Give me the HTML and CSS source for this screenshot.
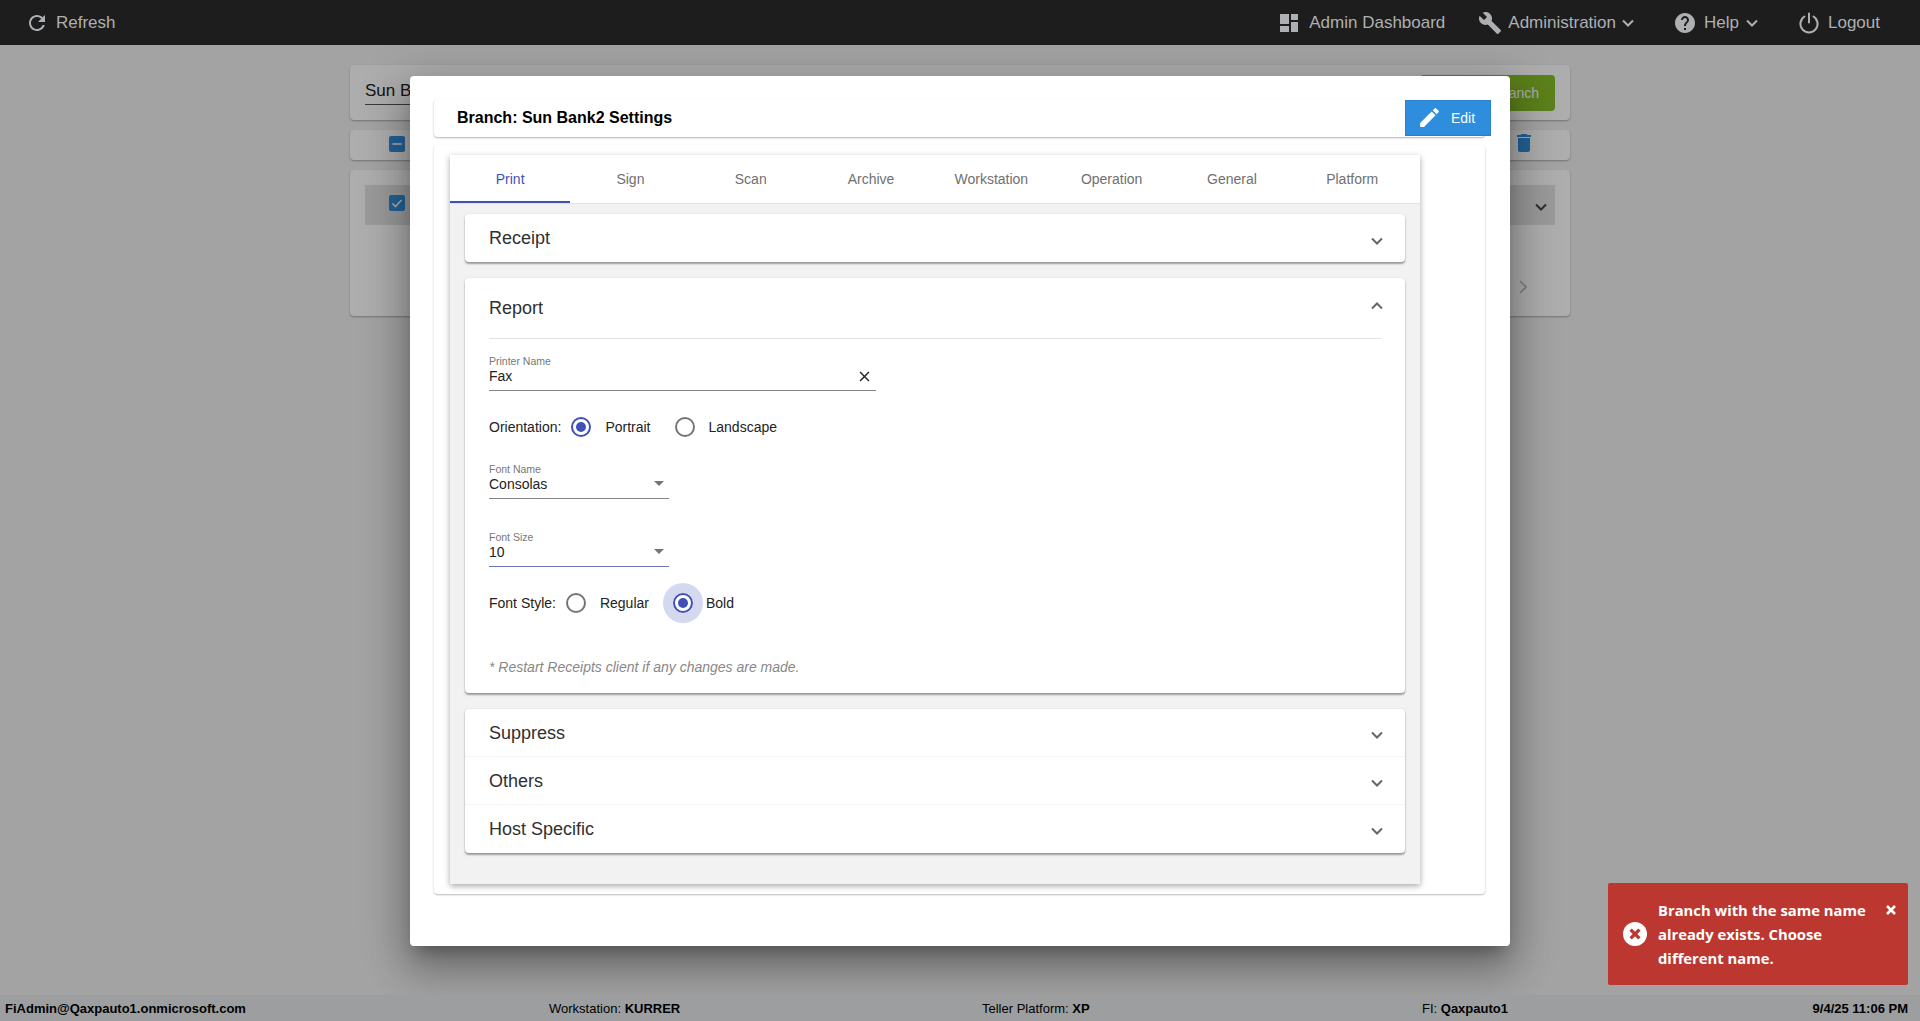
FILE: index.html
```html
<!DOCTYPE html>
<html lang="en">
<head>
<meta charset="utf-8">
<title>Branch Settings</title>
<link rel="stylesheet" href="styles.css">
</head>
<body>
<header class="topbar">
  <div class="nav-item nav-refresh">
    <svg class="ico" viewBox="0 0 24 24"><path d="M17.65 6.35C16.2 4.9 14.21 4 12 4c-4.42 0-7.99 3.58-7.99 8s3.57 8 7.99 8c3.73 0 6.84-2.55 7.73-6h-2.08c-.82 2.33-3.04 4-5.65 4-3.31 0-6-2.69-6-6s2.69-6 6-6c1.66 0 3.14.69 4.22 1.78L13 11h7V4l-2.35 2.35z"/></svg>
    <span>Refresh</span>
  </div>
  <div class="nav-right">
    <div class="nav-item nav-dash">
      <svg class="ico" viewBox="0 0 24 24"><path d="M3 13h9V3H3v10zm0 8h9v-6H3v6zm11 0h7V11h-7v10zm0-18v6h7V3h-7z"/></svg>
      <span>Admin Dashboard</span>
    </div>
    <div class="nav-item nav-admin">
      <svg class="ico" viewBox="0 0 24 24"><path d="M22.7 19l-9.1-9.1c.9-2.3.4-5-1.5-6.9-2-2-5-2.4-7.4-1.3L9 6 6 9 1.6 4.7C.4 7.1.9 10.1 2.9 12.1c1.9 1.9 4.6 2.4 6.9 1.5l9.1 9.1c.4.4 1 .4 1.4 0l2.3-2.3c.5-.4.5-1.1.1-1.4z"/></svg>
      <span>Administration</span>
      <svg class="caret" viewBox="0 0 12 8"><path d="M1 1.5l5 5 5-5"/></svg>
    </div>
    <div class="nav-item nav-help">
      <svg class="ico" viewBox="0 0 24 24"><path d="M12 2C6.48 2 2 6.48 2 12s4.48 10 10 10 10-4.48 10-10S17.52 2 12 2zm1 17h-2v-2h2v2zm2.07-7.75l-.9.92C13.45 12.9 13 13.5 13 15h-2v-.5c0-1.1.45-2.1 1.17-2.83l1.24-1.26c.37-.36.59-.86.59-1.41 0-1.1-.9-2-2-2s-2 .9-2 2H8c0-2.21 1.79-4 4-4s4 1.79 4 4c0 .88-.36 1.68-.93 2.25z"/></svg>
      <span>Help</span>
      <svg class="caret" viewBox="0 0 12 8"><path d="M1 1.5l5 5 5-5"/></svg>
    </div>
    <div class="nav-item nav-logout">
      <svg class="ico ico-stroke" viewBox="0 0 24 24"><path d="M7.5 5.5a8.6 8.6 0 1 0 9 0M12 2.5v9"/></svg>
      <span>Logout</span>
    </div>
  </div>
</header>

<main class="backdrop-page">
  <section class="bg-card bg-search">
    <div class="bg-input">Sun Bank2</div>
    <div class="bg-add">Add Branch</div>
  </section>
  <section class="bg-card bg-tools">
    <span class="bg-check"><svg viewBox="0 0 16 16"><path class="dash" d="M3.5 8h9"/></svg></span>
    <svg class="bg-trash" viewBox="0 0 24 24"><path d="M6 19c0 1.1.9 2 2 2h8c1.1 0 2-.9 2-2V7H6v12zM19 4h-3.5l-1-1h-5l-1 1H5v2h14V4z"/></svg>
  </section>
  <section class="bg-card bg-list">
    <div class="bg-row">
      <span class="bg-check"><svg viewBox="0 0 16 16"><path class="tick" d="M3.5 8.5l3 3 6-6.5"/></svg></span>
      <svg class="chev bg-chev" viewBox="0 0 12 8"><path d="M1 1.5l5 5 5-5"/></svg>
    </div>
    <div class="bg-pager"><svg class="bg-next" viewBox="0 0 8 14"><path d="M1 1l6 6-6 6"/></svg></div>
  </section>
</main>

<footer class="statusbar">
  <strong class="st-user">FiAdmin@Qaxpauto1.onmicrosoft.com</strong>
  <span class="st-ws">Workstation: <b>KURRER</b></span>
  <span class="st-tp">Teller Platform: <b>XP</b></span>
  <span class="st-fi">FI: <b>Qaxpauto1</b></span>
  <strong class="st-time">9/4/25 11:06 PM</strong>
</footer>

<div class="overlay">
  <div class="modal">
    <div class="modal-head">
      <h2>Branch: Sun Bank2 Settings</h2>
      <button class="edit-btn">
        <svg viewBox="0 0 24 24"><path d="M3 17.25V21h3.75L17.81 9.94l-3.75-3.75L3 17.25zM20.71 7.04c.39-.39.39-1.02 0-1.41l-2.34-2.34c-.39-.39-1.02-.39-1.41 0l-1.83 1.83 3.75 3.75 1.83-1.83z"/></svg>
        <span>Edit</span>
      </button>
    </div>
    <div class="modal-body">
      <div class="settings">
        <nav class="tabs">
          <div class="tab active">Print</div>
          <div class="tab">Sign</div>
          <div class="tab">Scan</div>
          <div class="tab">Archive</div>
          <div class="tab">Workstation</div>
          <div class="tab">Operation</div>
          <div class="tab">General</div>
          <div class="tab">Platform</div>
        </nav>
        <div class="tab-content">
          <div class="panel panel-closed">
            <div class="panel-head"><span>Receipt</span><svg class="chev" viewBox="0 0 12 8"><path d="M1 1.5l5 5 5-5"/></svg></div>
          </div>
          <div class="panel panel-open">
            <div class="panel-head report-head"><span>Report</span><svg class="chev up" viewBox="0 0 12 8"><path d="M1 6.5l5-5 5 5"/></svg></div>
            <div class="report-body">
              <div class="field field-wide">
                <label>Printer Name</label>
                <div class="field-value">Fax<svg class="clear" viewBox="0 0 24 24"><path d="M19 6.41L17.59 5 12 10.59 6.41 5 5 6.41 10.59 12 5 17.59 6.41 19 12 13.41 17.59 19 19 17.59 13.41 12z"/></svg></div>
              </div>
              <div class="radio-line line-orient">
                <span class="rl-label">Orientation:</span>
                <span class="radio on"></span><span class="radio-text">Portrait</span>
                <span class="radio"></span><span class="radio-text">Landscape</span>
              </div>
              <div class="field field-select field-font">
                <label>Font Name</label>
                <div class="field-value">Consolas<i class="arrow"></i></div>
              </div>
              <div class="field field-select field-size focused">
                <label>Font Size</label>
                <div class="field-value">10<i class="arrow"></i></div>
              </div>
              <div class="radio-line line-style">
                <span class="rl-label">Font Style:</span>
                <span class="radio"></span><span class="radio-text">Regular</span>
                <span class="radio on ripple"></span><span class="radio-text">Bold</span>
              </div>
              <p class="note">* Restart Receipts client if any changes are made.</p>
            </div>
          </div>
          <div class="panel panel-group">
            <div class="panel-head row"><span>Suppress</span><svg class="chev" viewBox="0 0 12 8"><path d="M1 1.5l5 5 5-5"/></svg></div>
            <div class="panel-head row"><span>Others</span><svg class="chev" viewBox="0 0 12 8"><path d="M1 1.5l5 5 5-5"/></svg></div>
            <div class="panel-head row"><span>Host Specific</span><svg class="chev" viewBox="0 0 12 8"><path d="M1 1.5l5 5 5-5"/></svg></div>
          </div>
        </div>
      </div>
    </div>
  </div>
</div>

<div class="toast">
  <svg class="toast-ico" viewBox="0 0 24 24"><circle cx="12" cy="12" r="12"/><path d="M7.6 7.6l8.8 8.8M16.4 7.6l-8.8 8.8"/></svg>
  <div class="toast-text">Branch with the same name already exists. Choose different name.</div>
  <svg class="toast-x" viewBox="0 0 12 12"><path d="M2 2l8 8M10 2l-8 8"/></svg>
</div>
</body>
</html>
```

FILE: styles.css
```css
* { box-sizing: border-box; }
html, body { height: 100%; }
body {
  margin: 0;
  height: 1021px;
  overflow: hidden;
  position: relative;
  display: flex;
  flex-direction: column;
  background: #f0f0f0;
  font-family: "Liberation Sans", Arial, sans-serif;
  color: #222;
}

/* top bar */
.topbar {
  position: relative;
  z-index: 5;
  flex: 0 0 45px;
  height: 45px;
  display: flex;
  align-items: center;
  justify-content: space-between;
  background: #1d1d1d;
  color: #adb0b2;
  font-size: 17px;
}
.nav-item { display: flex; align-items: center; }
.nav-refresh { margin-left: 25px; gap: 7px; }
.nav-right { display: flex; align-items: center; padding-right: 40px; }
.ico { width: 24px; height: 24px; fill: #adb0b2; flex: none; }
.ico-stroke { fill: none; stroke: #adb0b2; stroke-width: 2; stroke-linecap: round; }
.caret { width: 12px; height: 8px; fill: none; stroke: #adb0b2; stroke-width: 2; }
.nav-dash { gap: 8px; margin-right: 33px; }
.nav-admin { gap: 6px; margin-right: 39px; }
.nav-help { gap: 7px; margin-right: 39px; }
.nav-logout { gap: 7px; }

/* page behind the dialog */
.backdrop-page {
  flex: 1;
  padding-top: 20px;
  display: flex;
  flex-direction: column;
  align-items: center;
  gap: 10px;
}
.bg-card {
  width: 1220px;
  background: #fff;
  border-radius: 4px;
  box-shadow: 0 1px 2px rgba(0, 0, 0, .3);
}
.bg-search { height: 55px; display: flex; justify-content: space-between; padding: 10px 15px; }
.bg-input { width: 300px; height: 30px; padding-top: 6px; font-size: 17px; border-bottom: 1px solid #555; }
.bg-add { width: 135px; height: 36px; background: #88bd29; border-radius: 4px; color: #fff; font-size: 14px; line-height: 36px; text-align: right; padding-right: 16px; }
.bg-tools { height: 30px; display: flex; align-items: center; justify-content: space-between; padding: 0 34px 0 39px; }
.bg-check { width: 16px; height: 16px; border-radius: 2px; background: #3590e0; display: block; }
.bg-tools .bg-check { margin-bottom: 2px; }
.bg-row .bg-check { margin-bottom: 4px; }
.bg-check svg { display: block; width: 16px; height: 16px; fill: none; stroke: #fff; stroke-width: 1.6; }
.bg-trash { width: 24px; height: 24px; fill: #3590e0; margin-bottom: 4px; }
.bg-list { height: 146px; padding: 15px; }
.bg-row { height: 40px; background: #e4e4e4; display: flex; align-items: center; justify-content: space-between; padding: 0 8px 0 24px; }
.chev.bg-chev { stroke: #444; margin: 4px 0 0; }
.bg-pager { display: flex; justify-content: flex-end; padding: 55px 28px 0 0; }
.bg-next { width: 8px; height: 14px; fill: none; stroke: #bbb; stroke-width: 1.6; }

/* status bar */
.statusbar {
  position: relative;
  z-index: 5;
  flex: 0 0 26px;
  height: 26px;
  display: flex;
  align-items: center;
  background: #9d9e9f;
  color: #000;
  font-size: 13px;
  padding: 0 12px 0 5px;
}
.statusbar b, .statusbar strong { font-weight: bold; }
.st-user { width: 544px; }
.st-ws { width: 433px; }
.st-tp { width: 440px; }
.st-fi { flex: 1; }

/* dialog */
.overlay {
  position: absolute;
  inset: 45px 0 26px 0;
  z-index: 3;
  background: rgba(0, 0, 0, .32);
  padding-top: 31px;
  display: flex;
  justify-content: center;
  align-items: flex-start;
}
.modal {
  width: 1100px;
  height: 870px;
  background: #fff;
  border-radius: 4px;
  padding: 23px 25px 0 24px;
  box-shadow: 0 11px 15px -7px rgba(0, 0, 0, .3), 0 24px 38px 3px rgba(0, 0, 0, .2), 0 9px 46px 8px rgba(0, 0, 0, .18);
}
.modal-head {
  height: 38px;
  display: flex;
  align-items: center;
  justify-content: space-between;
  border-radius: 4px;
  box-shadow: 0 1px 2px rgba(0, 0, 0, .3);
  padding-left: 23px;
}
.modal-head h2 { margin: 0; font-size: 16px; color: #000; font-weight: bold; }
.edit-btn {
  width: 86px;
  height: 36px;
  margin-right: -6px;
  margin-top: -1px;
  border: 1px solid #2a80ca;
  background: #2e8ddd;
  color: #fff;
  font: 14px "Liberation Sans", Arial, sans-serif;
  display: flex;
  align-items: center;
  padding: 0 0 0 11px;
  gap: 9px;
}
.edit-btn svg { width: 25px; height: 25px; fill: #fff; flex: none; }
.modal-body {
  margin-top: 8px;
  height: 749px;
  padding: 10px 65px 10px 16px;
  border-radius: 4px;
  box-shadow: 0 1px 2px rgba(0, 0, 0, .28);
}
.settings {
  height: 729px;
  display: flex;
  flex-direction: column;
  background: #f2f2f2;
  box-shadow: 0 2px 6px rgba(0, 0, 0, .35);
}
.tabs {
  flex: 0 0 49px;
  height: 49px;
  display: flex;
  background: #fff;
  border-bottom: 1px solid #e2e2e2;
}
.tab {
  width: 120.3px;
  height: 48px;
  text-align: center;
  line-height: 48px;
  font-size: 14px;
  color: #707070;
}
.tab.active { color: #3f51b5; border-bottom: 2px solid #3f51b5; }
.tab-content { padding: 10px 15px 0; }
.panel {
  background: #fff;
  border-radius: 4px;
  box-shadow: 0 2px 2px rgba(0, 0, 0, .35), 0 0 2px rgba(0, 0, 0, .12);
}
.panel-closed { height: 48px; }
.panel-open { height: 415px; margin-top: 16px; padding: 0 24px; }
.panel-group { height: 144px; margin-top: 16px; }
.panel-head {
  height: 48px;
  display: flex;
  align-items: center;
  justify-content: space-between;
  padding: 0 24px;
  font-size: 18px;
  color: #303030;
}
.panel-head.row { border-bottom: 1px solid #f3f3f3; padding-top: 2px; }
.panel-head.row:last-child { border-bottom: 0; padding-top: 0; }
.chev { width: 12px; height: 8px; fill: none; stroke: #666; stroke-width: 2; margin: 6px -2px 0 0; }
.panel-head.row .chev { margin-top: 2px; }
.panel-head.row:last-child .chev { margin-top: 4px; }
.chev.up { margin: -5px -2px 0 0; }
.report-head { height: 61px; padding: 0; border-bottom: 1px solid #e3e3e3; }
.report-body { font-size: 14px; }
.field label { display: block; font-size: 10.5px; line-height: 12px; color: #777; }
.field-value {
  position: relative;
  height: 24px;
  line-height: 19px;
  font-size: 14px;
  border-bottom: 1px solid #858585;
  display: flex;
  justify-content: space-between;
}
.field-wide { width: 387px; margin-top: 16px; }
.clear { width: 17px; height: 17px; margin: 1px 3px 0 0; fill: #222; }
.field-select { width: 180px; }
.field-font { margin-top: 16px; }
.field-size { margin-top: 32px; }
.focused .field-value { border-bottom: 1px solid #6a76b8; }
.arrow {
  width: 0;
  height: 0;
  margin: 6px 5px 0 0;
  border-left: 5px solid transparent;
  border-right: 5px solid transparent;
  border-top: 5px solid #757575;
}
.radio-line { display: flex; align-items: center; height: 40px; }
.line-orient { margin-top: 16px; }
.line-style { margin-top: 16px; }
.radio {
  position: relative;
  width: 20px;
  height: 20px;
  border-radius: 50%;
  border: 2px solid #757575;
  flex: none;
}
.radio.on { border-color: #3f51b5; }
.radio.on::after {
  content: "";
  position: absolute;
  inset: 3px;
  border-radius: 50%;
  background: #3f51b5;
}
.radio.ripple { box-shadow: 0 0 0 10px rgba(63, 81, 181, .22); }
.line-orient .rl-label { margin-right: 10px; }
.line-orient .radio-text { margin-left: 14px; margin-right: 24px; }
.line-style .rl-label { margin-right: 10px; }
.line-style .radio-text { margin-left: 14px; margin-right: 24px; }
.line-style .radio-text:last-child { margin-left: 13px; }
.note { margin: 36px 0 0; font-size: 14px; font-style: italic; color: #888; line-height: 17px; }

/* toast */
.toast {
  position: absolute;
  z-index: 8;
  left: 1608px;
  top: 883px;
  width: 300px;
  height: 102px;
  display: flex;
  align-items: center;
  background: #bc3730;
  border-radius: 2px;
  color: #fff;
  font-family: "Open Sans", sans-serif;
  font-weight: 700;
  font-size: 14.8px;
  line-height: 24px;
  padding-left: 15px;
}
.toast-ico { width: 24px; height: 24px; flex: none; margin-right: 11px; }
.toast-ico circle { fill: #fff; }
.toast-ico path { fill: none; stroke: #bc3730; stroke-width: 3.4; }
.toast-text { width: 220px; }
.toast-x {
  position: absolute;
  right: 11px;
  top: 21px;
  width: 12px;
  height: 12px;
  fill: none;
  stroke: #fff;
  stroke-width: 2.6;
}
```
